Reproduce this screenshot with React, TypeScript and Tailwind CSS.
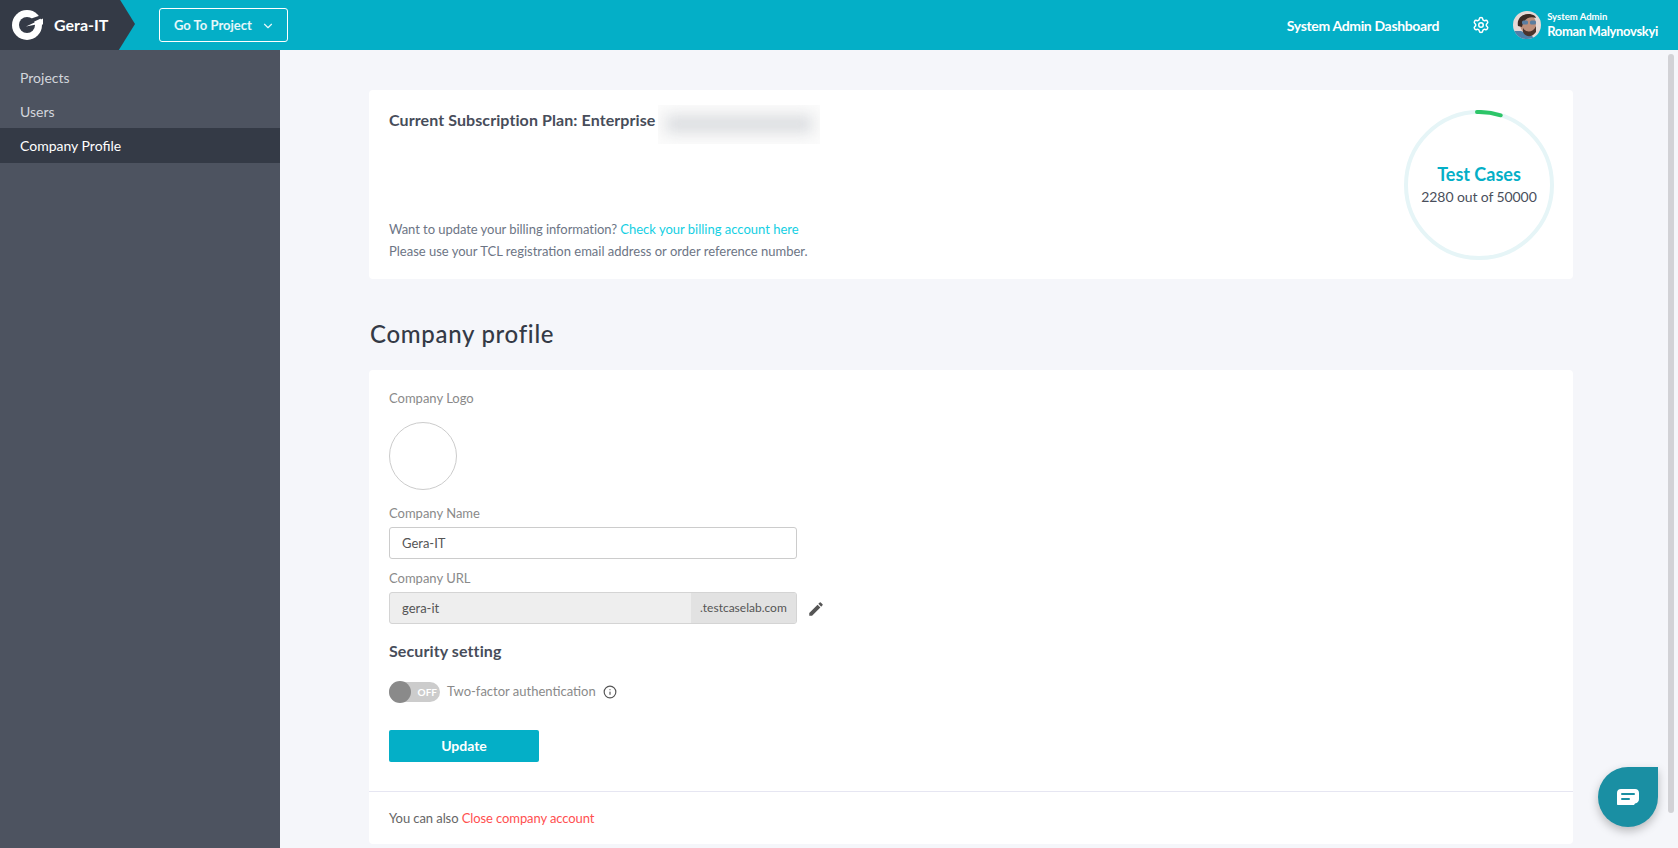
import { Settings, ChevronDown, Info } from "lucide-react";
import { MdEdit } from "react-icons/md";

function Logo() {
  return (
    <svg width="32" height="32" viewBox="0 0 32 32" className="shrink-0">
      <circle cx="16" cy="16" r="15" fill="#fff" />
      <circle cx="16" cy="16" r="8" fill="#343a46" />
      <path d="M16 11 L32 5.500 L32 8.500 L18 15 Z" fill="#343a46" />
      <path d="M32 9.500 L32 15.500 L24 15.800 L15 17.500 Z" fill="#fff" />
    </svg>
  );
}

function Avatar() {
  return (
    <svg width="28" height="28" viewBox="0 0 28 28" className="shrink-0 rounded-full">
      <rect width="28" height="28" fill="#e6d9d6" />
      <path d="M0 20 L8 20 L18 24 L22 28 L0 28 Z" fill="#4f7fa8" />
      <ellipse cx="15" cy="13" rx="8" ry="10" fill="#bd8f7b" />
      <path d="M5 15 C3 5 14 0 22 5 L23 7 C17 5 11 7 9 16 Z" fill="#3a2a24" />
      <path d="M10 17 C13 22 20 22 23 15 L23 21 C19 27 12 26 10 21 Z" fill="#4a342c" />
      <rect x="9" y="9.500" width="6" height="4" rx="1.500" fill="#5a7da0" />
      <rect x="17" y="9.500" width="6" height="4" rx="1.500" fill="#5a7da0" />
    </svg>
  );
}

function ChatIcon() {
  return (
    <svg width="24" height="18" viewBox="0 0 24 18">
      <path d="M5 1 H19 C21.500 1 23 2.500 23 5 V11 C23 13.500 21.500 15 19 15.500 L18 17 L2 17 C1.400 17 1 16.600 1 16 V5 C1 2.500 2.500 1 5 1 Z" fill="#fff" />
      <rect x="5" y="5" width="14" height="2" rx="1" fill="#1a8fa3" />
      <rect x="5" y="10" width="9" height="2" rx="1" fill="#1a8fa3" />
    </svg>
  );
}

function ProgressRing() {
  return (
    <div className="relative w-[150px] h-[150px] shrink-0 flex flex-col items-center justify-center">
      <svg width="150" height="150" viewBox="0 0 150 150" className="absolute inset-0">
        <circle cx="75" cy="75" r="73" fill="none" stroke="#e6f5f7" strokeWidth="4" />
        <path d="M73 2 A73 73 0 0 1 96.700 5.300" fill="none" stroke="#2dc568" strokeWidth="4" strokeLinecap="round" />
      </svg>
      <div className="text-[18px] leading-[24px] font-bold text-[#04afc7]">Test Cases</div>
      <div className="text-[14px] leading-[22px] tracking-[-0.1px] text-[#4a4f5c]">2280 out of 50000</div>
    </div>
  );
}

function FieldLabel({ children, className = "" }: { children: string; className?: string }) {
  return <div className={`text-[13px] leading-[20px] text-[#8a8a8a] ${className}`}>{children}</div>;
}

export default function App() {
  return (
    <div className="relative h-[848px] w-full overflow-hidden flex flex-col font-['Lato','Liberation_Sans',sans-serif] bg-[#f5f6fa]">
      <header className="h-[50px] shrink-0 bg-[#04afc7] flex items-center text-white">
        <div className="w-[135px] h-[50px] shrink-0 bg-[#343a46] [clip-path:polygon(0_0,89%_0,100%_48%,88%_100%,0_100%)] flex items-center gap-[11px] pl-[11px]">
          <Logo />
          <span className="text-[16px] font-bold leading-none">Gera-IT</span>
        </div>
        <button className="ml-[24px] h-[34px] w-[129px] border border-white rounded-[3px] flex items-center pl-[14px] pt-[1px] text-[13px] font-bold text-white/90">
          Go To Project
          <ChevronDown size={14} className="ml-[9px]" />
        </button>
        <div className="ml-auto flex items-center">
          <span className="text-[14px] tracking-[-0.34px] font-bold">System Admin Dashboard</span>
          <Settings size={18} className="ml-[33px]" />
          <div className="ml-[23px]"><Avatar /></div>
          <div className="ml-[6px] mr-[20px] flex flex-col">
            <span className="text-[9.5px] font-bold leading-[12px]">System Admin</span>
            <span className="text-[13px] tracking-[-0.32px] font-bold leading-[17px]">Roman Malynovskyi</span>
          </div>
        </div>
      </header>
      <div className="flex flex-1 min-h-0">
        <aside className="w-[280px] shrink-0 bg-[#4d5360] pt-[10px] text-[14px]">
          <div className="h-[34px] pl-[20px] flex items-center text-[#d3d6dc]">Projects</div>
          <div className="h-[34px] pl-[20px] flex items-center text-[#d3d6dc]">Users</div>
          <div className="h-[35px] pl-[20px] flex items-center bg-[#343a46] text-white">Company Profile</div>
        </aside>
        <main className="flex-1 min-w-0 pl-[89px] pr-[105px] pt-[40px]">
          <section className="h-[189px] bg-white rounded-[4px] pl-[20px] pr-[19px] flex justify-between">
            <div className="flex flex-col">
              <div className="flex items-start pt-[14px]">
                <h2 className="text-[16px] tracking-[0.09px] leading-[32px] font-bold text-[#474d5a]">Current Subscription Plan: Enterprise</h2>
                <div className="ml-[3px] mt-[1px] w-[162px] h-[39px] overflow-hidden bg-[#fbfbfb]">
                  <div className="mt-[10px] ml-[8px] w-[146px] h-[18px] bg-[#dcdee1] blur-[7px]"></div>
                </div>
              </div>
              <div className="mt-auto pb-[17px] text-[13px] leading-[22px] text-[#6d7585]">
                <div><span className="tracking-[-0.05px]">Want to update your billing information? </span><span className="text-[#14cfe3]">Check your billing account here</span></div>
                <div>Please use your TCL registration email address or order reference number.</div>
              </div>
            </div>
            <div className="self-center"><ProgressRing /></div>
          </section>
          <h1 className="mt-[37px] ml-[1px] text-[24px] leading-[36px] font-medium tracking-[0.7px] text-[#343a46]">Company profile</h1>
          <section className="mt-[18px] h-[474px] bg-white rounded-[4px]">
            <div className="h-[422px] px-[20px] pt-[18px] flex flex-col border-b border-[#e6e6f2]">
              <FieldLabel>Company Logo</FieldLabel>
              <div className="mt-[14px] w-[68px] h-[68px] rounded-full border border-[#cccccc]"></div>
              <FieldLabel className="mt-[13px]">Company Name</FieldLabel>
              <div className="mt-[4px] h-[32px] w-[408px] border border-[#cccccc] rounded-[3px] flex items-center pl-[12px] pt-[1px] text-[13px] text-[#555555]">Gera-IT</div>
              <FieldLabel className="mt-[9px]">Company URL</FieldLabel>
              <div className="mt-[4px] flex items-center">
                <div className="h-[32px] w-[408px] border border-[#d4d4d4] rounded-[3px] bg-[#eeeeee] flex items-stretch overflow-hidden text-[#555555]">
                  <div className="flex-1 pl-[12px] pt-[1px] flex items-center text-[13px]">gera-it</div>
                  <div className="w-[105px] bg-[#e2e2e2] flex items-center pl-[9px] text-[12px]">.testcaselab.com</div>
                </div>
                <MdEdit size={18} className="ml-[10px] mt-[1px] text-[#555555]" />
              </div>
              <h3 className="mt-[16px] text-[16px] tracking-[0.1px] leading-[22px] font-bold text-[#474d5a]">Security setting</h3>
              <div className="mt-[20px] flex items-center">
                <div className="relative w-[51px] h-[20px]">
                  <div className="absolute left-0 top-0 w-[51px] h-[20px] rounded-full bg-[#cccccc] flex items-center justify-end pr-[3px] text-[10px] font-bold text-white">OFF</div>
                  <div className="absolute left-0 top-[-1px] w-[22px] h-[22px] rounded-full bg-[#8a8a8a]"></div>
                </div>
                <span className="ml-[7px] text-[13px] text-[#8a8a8a]">Two-factor authentication</span>
                <Info size={14} className="ml-[7px] text-[#555555]" />
              </div>
              <button className="mt-[28px] w-[150px] h-[32px] pb-[1px] bg-[#04afc7] rounded-[2px] text-white text-[14px] font-bold">Update</button>
            </div>
            <div className="h-[52px] px-[20px] pt-[1px] flex items-center text-[13px] text-[#666666]">
              <span><span className="tracking-[-0.08px]">You can also </span><span className="tracking-[-0.1px] text-[#ff4f4f]">Close company account</span></span>
            </div>
          </section>
        </main>
      </div>
      <div className="absolute right-[4px] top-[54px] w-[6px] h-[759px] rounded-full bg-[#d2d2d6]"></div>
      <div className="absolute left-[1598px] top-[767px] w-[60px] h-[60px] bg-[#1a8fa3] rounded-full rounded-tr-[6px] shadow-[0_4px_10px_rgba(0,0,0,0.25)] flex items-center justify-center">
        <ChatIcon />
      </div>
    </div>
  );
}
